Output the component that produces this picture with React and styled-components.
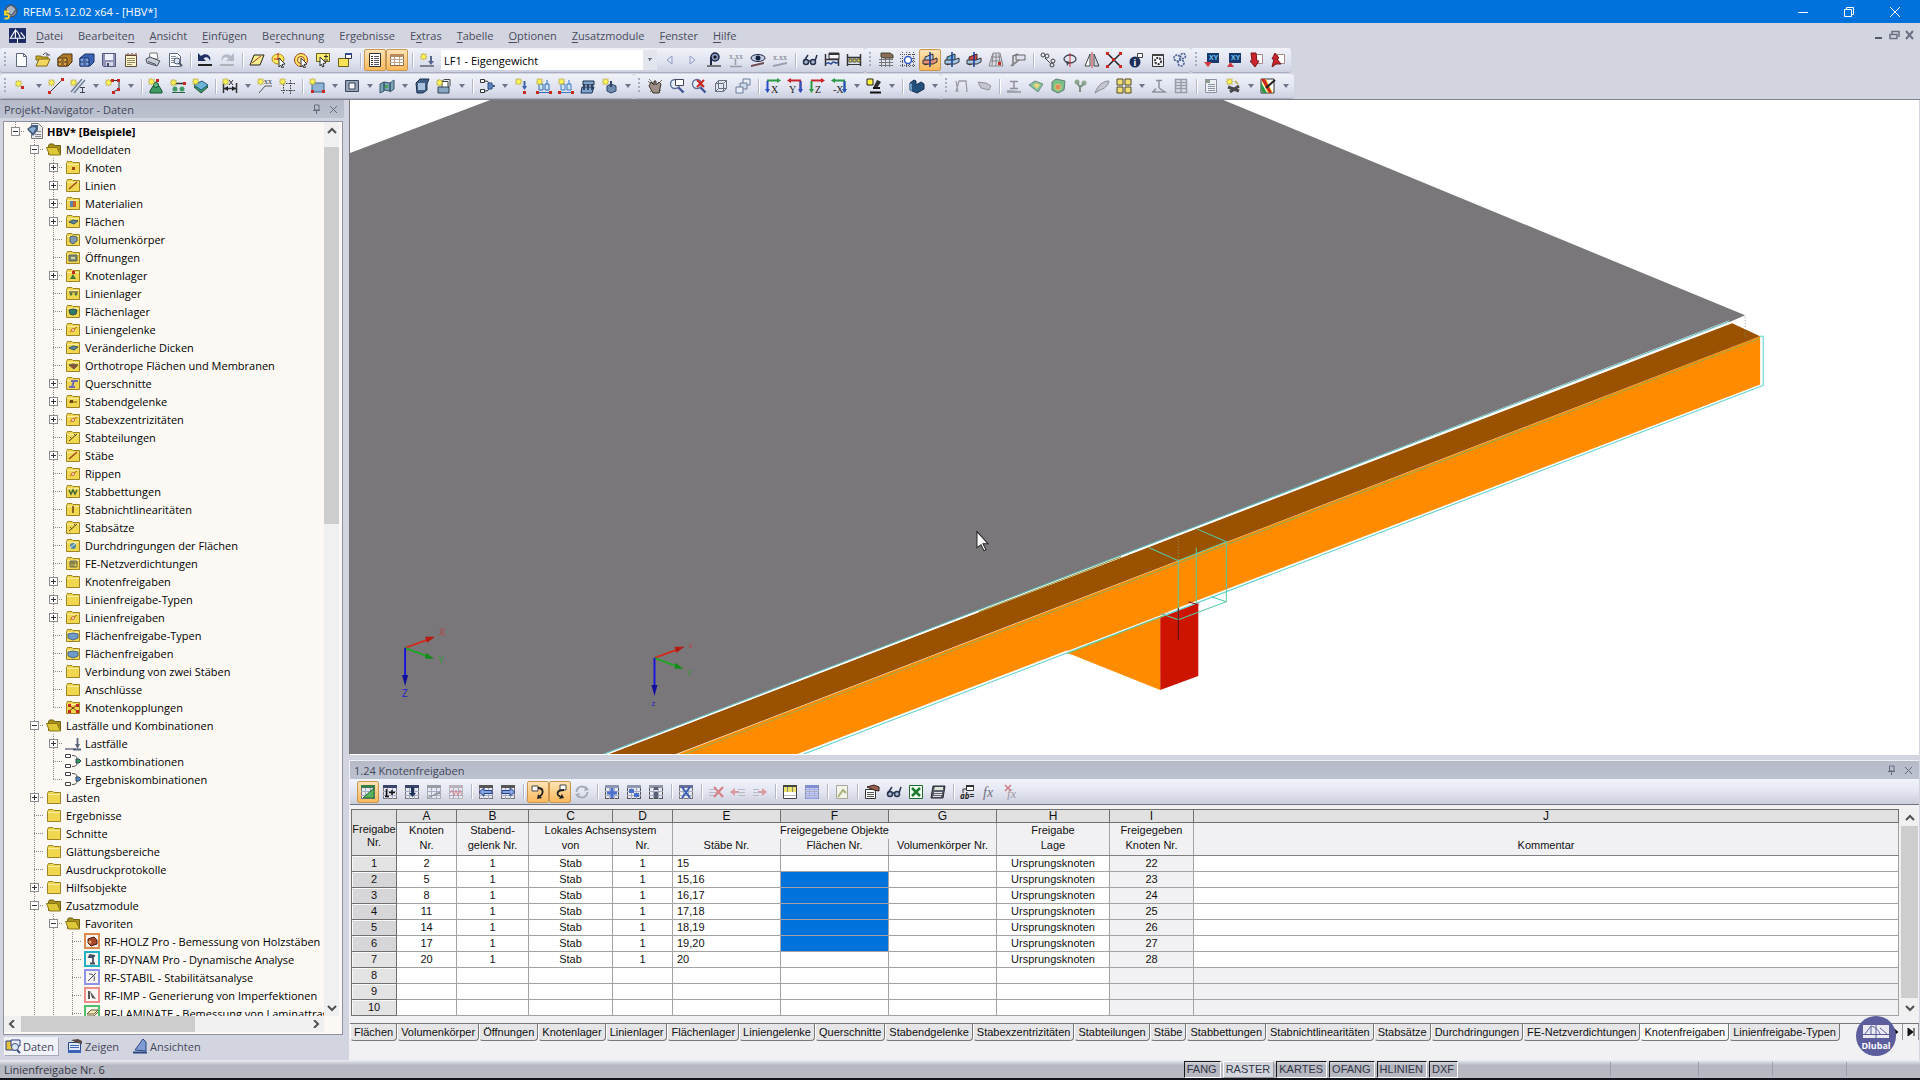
import React from 'react';
import styled, { createGlobalStyle, css } from 'styled-components';

const GlobalStyle = createGlobalStyle`
    * { box-sizing: border-box; }
    html, body { margin: 0; height: 100%; }
    body {
        font-family: "Open Sans", "Noto Sans", sans-serif;
        font-size: 11px;
        color: #111;
        background: #d2d4e0;
        overflow: hidden;
    }
    button, select { font: inherit; color: inherit; }
    button { border: 0; padding: 0; background: none; }
`;

const dots = 'repeating-linear-gradient(#8a8a8a 0 1px, transparent 1px 2px)';
const dotsX = 'repeating-linear-gradient(90deg, #8a8a8a 0 1px, transparent 1px 2px)';
const tableFont = '"Liberation Sans", Arial, sans-serif';

/* ---------- icon drawing helpers ---------- */

const Line = ({ d, c = '#333', w = 1 }) => <path d={d} fill="none" stroke={c} strokeWidth={w} />;
const Fill = ({ d, c, s = 'none' }) => <path d={d} fill={c} stroke={s} />;
const Star = ({ x = 0, y = 0 }) => (
    <path
        transform={`translate(${x} ${y})`}
        d="M3.5 0l.9 1.8L6.3.9l-.8 1.9L7.2 3.6l-1.8.8.8 1.9-1.9-.8-.8 1.7-.8-1.7-1.9.8.8-1.9L0 3.6l1.8-.8L.9.9l1.8.9z"
        fill="#fff35a" stroke="#a89b20" strokeWidth=".5"
    />
);
const Node = ({ x, y, c = '#c8281e' }) => <rect x={x} y={y} width="3" height="3" fill={c} />;
const Grid = ({ head = '#3a4468', c = '#777' }) => (
    <>
        <rect x="1.5" y="1.5" width="13" height="13" fill="#e6e9f2" stroke={c} />
        <rect x="1" y="1" width="14" height="3" fill={head} />
        <Line d="M1 7.5H15M1 11.5H15M5.5 4V15M10.5 4V15" c="#a5abc0" />
    </>
);
const Axis = ({ label, a, b, flip }) => (
    <>
        <Line d={flip ? 'M14 2.5H3M13.5 3V14' : 'M2 2.5H13'} c={a} w="2" />
        <Fill d={flip ? 'M4 0v5L0 2.5z' : 'M12 0v5l4-2.5z'} c={a} />
        <Line d={flip ? 'M13.5 3V12' : 'M2.5 3V12'} c={b} w="2" />
        <Fill d={flip ? 'M11 11h5l-2.5 4z' : 'M0 11h5l-2.5 4z'} c={b} />
        <text x={flip ? 2 : 6} y="15" fontSize="10" fontFamily="Liberation Serif, serif" fill="#222">{label}</text>
    </>
);
const Lens = ({ children }) => (
    <>
        <circle cx="6" cy="6" r="4.5" fill="#e6f0fb" stroke="#5a6f94" strokeWidth="1.4" />
        <Line d="M9.5 9.5L14.5 14.5" c="#40549a" w="2.4" />
        {children}
    </>
);
const Plane = ({ x, y }) => (
    <>
        <Fill d="M3 5l8-3v8l-8 3z" c={x} s="#333" />
        <Fill d="M1 8h9l5-2v4l-4 2H1z" c={y} s="#333" />
        <Line d="M8 0V15" c="#173a8c" w="1.5" />
    </>
);
const Support = ({ c = '#2f6fb0' }) => (
    <>
        <Fill d="M3 6h4v6H3zM9 6h4v6H9z" c="#cfe2f4" s={c} />
        <Line d="M2 14.5H14M5 2V6M11 2V6" c={c} />
        <Node x={0} y={13} /><Node x={13} y={13} />
    </>
);

const icons = {
    newDoc: <><Fill d="M3.5 1.5h7l3 3v10h-10z" c="#fff" s="#5b6880" /><Line d="M10.5 1.5v3h3" c="#5b6880" /></>,
    open: <><Fill d="M1 4h5l1 1h6v3H1z" c="#c9a92c" s="#80691a" /><Fill d="M1 14l3-7h11l-3 7z" c="#f2d860" s="#80691a" /><Line d="M8 3c2-3 5-2 5 0M11 3h4" c="#445" /></>,
    cabinet: <><Fill d="M1 6l5-4h9v8l-4 4H1z" c="#b07a28" s="#4d3510" /><Fill d="M1 6h9v8H1z" c="#d9a24a" s="#4d3510" /><Line d="M1 10H10M4 8H7M4 12H7" c="#4d3510" /></>,
    cabinetBlue: <><Fill d="M1 6l5-4h9v8l-4 4H1z" c="#3b63b4" s="#1b2e66" /><Fill d="M1 6h9v8H1z" c="#7fa4e4" s="#1b2e66" /><Line d="M1 10H10M4 8H7M4 12H7" c="#1b2e66" /></>,
    save: <><Fill d="M1.500 1.500h13v13h-12l-1-1z" c="#8f93b8" s="#55597c" /><Fill d="M4 2h8v6H4z" c="#eef0fa" /><Fill d="M5 10h7v4H5z" c="#d4d6e4" /><Fill d="M6 11h2v3H6z" c="#444a72" /></>,
    notes: <><Fill d="M2.500 3.500h11v11h-11z" c="#fbf4d0" s="#5c4a34" /><Line d="M3 2v2M5 1v3M7 2v2M9 1v3M11 2v2M13 1v3" c="#6a3f2a" /><Line d="M4 6.500H12M4 8.500H12M4 10.500H12M4 12.500H9" c="#9a8a60" /></>,
    print: <><Fill d="M5 1h7l1 6H4z" c="#fff" s="#777" /><Fill d="M1 7l4-2 10 4-3 5-10-3z" c="#c8ccd6" s="#4b4f5c" /><Line d="M3 9.500L11 12.500" c="#4b4f5c" /></>,
    preview: <><Fill d="M2.500 1.500h8l3 3v10h-11z" c="#fff" s="#5b6880" /><Line d="M4 4.500H9M4 6.500H8M4 8.500H7M4 10.500H7" c="#8890a0" /><circle cx="10" cy="9" r="3" fill="#d8e4f4" stroke="#4b5870" /><Line d="M12 11l3 3" c="#4b5870" w="2" /></>,
    undo: <><Fill d="M1 1v8h8L6.500 6.500C9 4 12 5 13 9 15 4 9 0 4 4z" c="#1e2f66" /><Fill d="M1 12h14v2H1z" c="#222" /></>,
    redo: <><Fill d="M15 1v8H7L9.500 6.500C7 4 4 5 3 9 1 4 7 0 12 4z" c="#b3b7c6" /><Fill d="M1 12h14v2H1z" c="#b0b2bc" /></>,
    plane: <><Fill d="M5 3h10l-4 10H1z" c="#f8ee8a" s="#222" /><Line d="M3 11L12 4" c="#a33" /></>,
    pick: <><ellipse cx="7" cy="7" rx="6" ry="5" fill="#ffe95c" stroke="#b08b1e" /><Line d="M7 1V8M3 7H10" c="#c23" /><Fill d="M8 6l6 6-3 .4 1.500 3-1.500.6-1.300-3L8 15z" c="#fff" s="#333" /></>,
    pickAll: <><circle cx="8" cy="8" r="6.500" fill="#ffe95c" stroke="#a3412a" /><circle cx="8" cy="8" r="3.500" fill="#fff3a0" stroke="#a3412a" /><Fill d="M8 6l6 6-3 .4 1.500 3-1.500.6-1.300-3L8 15z" c="#fff" s="#333" /></>,
    pickAdd: <><Fill d="M1.500 1.500h13v8h-13z" c="#f8ea70" s="#6a611c" /><Line d="M9 4.500h4M11 2.500v4M9 8h4" /><Fill d="M5 5l6 6-3 .4 1 3-1.500.6-1-3L5 14z" c="#fff" s="#333" /></>,
    pane: <><Fill d="M1.500 6.500h10v8h-10z" c="#f8e258" s="#6a611c" /><Fill d="M8.500 1.500h6v5h-6z" c="#fff" s="#334" /><Fill d="M8 1h7v2H8z" c="#334a8c" /></>,
    listView: <><Fill d="M2.500 1.500h11v13h-11z" c="#fff" s="#333" /><Line d="M4 4.500H6M4 6.500H6M4 8.500H6M4 10.500H6M4 12.500H6" /><Line d="M7 4.500H12M7 6.500H12M7 8.500H12M7 10.500H12M7 12.500H12" c="#556" /></>,
    tableView: <><Fill d="M1.500 2.500h13v11h-13z" c="#fff" s="#8a6440" /><Fill d="M1 2h14v3H1z" c="#b88a60" /><Line d="M1 7.500H15M1 10.500H15M5.500 5V13M10.500 5V13" c="#bba58c" /></>,
    loadNew: <><Star x={1} y={1} /><Fill d="M1 13h14v2H1z" c="#7c8290" /><Fill d="M11 4h2v5h2l-3 4-3-4h2z" c="#55658c" /></>,
    prev: <Fill d="M10 4L5 8l5 4z" c="#e3e6f3" s="#8f9bc8" />,
    next: <Fill d="M6 4l5 4-5 4z" c="#e3e6f3" s="#8f9bc8" />,
    loadShow: <><circle cx="9" cy="5" r="4" fill="#8797bb" stroke="#1c2746" strokeWidth="1.500" /><circle cx="9" cy="5" r="1.500" fill="#111" /><Line d="M5 5V13" c="#1c2746" w="2" /><Fill d="M1 13h14v2H1z" c="#777" /></>,
    valGray: <><text x="1" y="7" fontSize="8" fontFamily="Liberation Serif, serif" fill="#777a86">x.xx</text><Line d="M7.500 7V13M2 14.500H14" c="#9a9da8" w="1.500" /></>,
    resShow: <><ellipse cx="8" cy="6" rx="7" ry="3.500" fill="#c3cbe0" stroke="#1c2746" /><circle cx="8" cy="6" r="2.500" fill="#15203c" /><Fill d="M1 15V13l13-3v2z" c="#704a50" /></>,
    valLine: <><text x="1" y="8" fontSize="8" fontFamily="Liberation Serif, serif" fill="#6d707c">x.xx</text><Fill d="M1 15v-2l14-3v2z" c="#9b9eaa" /></>,
    glasses: <><circle cx="4" cy="10" r="2.500" fill="#aebbd6" stroke="#28324e" strokeWidth="1.500" /><circle cx="11" cy="10" r="2.500" fill="#aebbd6" stroke="#28324e" strokeWidth="1.500" /><Line d="M7 9L9 9M2 9L6 3M13 9L15 3" c="#28324e" w="1.500" /></>,
    frame: <><Fill d="M5 1h10v6H5z" c="#f3f4f9" s="#333" /><Fill d="M5 1h10v2H5z" c="#333" /><Line d="M1.500 2V14M1 7.500H15M14.500 7V14" w="1.500" /><Line d="M2 12c3-4 4 2 6-1s4 2 6-1" c="#2e4a9a" w="1.500" /></>,
    frame2: <><Line d="M1.500 2V14M1 5.500H15M14.500 2V14" w="1.500" /><Fill d="M3 7h3v3H3zM7 7h3v3H7zM11 7h3v3h-3z" c="#e7d757" s="#554" /><Line d="M1 12.500H15" /></>,
    handGrid: <><Line d="M1 7.500H15M1 10.500H15M1 13.500H15M3.500 6V15M7.500 6V15M11.500 6V15" c="#777" /><Fill d="M3 1h9l3 2v3H6L3 5z" c="#8a6a58" s="#443" /></>,
    snapGrid: <><path d="M2.500 0V16M6.500 0V16M9.500 0V16M13.500 0V16M0 2.500H16M0 6.500H16M0 9.500H16M0 13.500H16" stroke="#555" strokeDasharray="1 1" fill="none" /><circle cx="8" cy="8" r="3.500" fill="#fff" stroke="#3059c4" strokeWidth="1.500" /></>,
    planeXY: <Plane x="#b9c8de" y="#e58f77" />,
    planeYZ: <Plane x="#6fb2e4" y="#a3c6ea" />,
    planeXZ: <Plane x="#e0463c" y="#a9c5e2" />,
    gridDots: <><Fill d="M5 1h7l3 13H1z" c="#d9dde8" s="#888" /><Line d="M3 5H13M3 9H14M8 1V14M5 2L4 14M11 2L12 14" c="#888" /><Node x={10} y={10} /></>,
    pin: <><Line d="M3 14V4L8 2" c="#777" w="1.500" /><Fill d="M6 3h9v5H6z" c="#dfe2ec" s="#666" /><Line d="M1 14L9 8" c="#888" w="2" /></>,
    moveCopy: <><circle cx="3" cy="3" r="2" fill="none" stroke="#444" /><circle cx="7" cy="4" r="2" fill="none" stroke="#444" /><Line d="M5 6L11 12" c="#444" /><circle cx="12" cy="13" r="2" fill="none" stroke="#444" /><circle cx="13" cy="9" r="2" fill="none" stroke="#444" /></>,
    rotate: <><ellipse cx="8" cy="7" rx="6" ry="4" fill="none" stroke="#445" strokeWidth="1.300" /><Line d="M8 1V15" c="#c33" /><Fill d="M4 9l4 1-3 4z" c="#445" /></>,
    mirror: <><Fill d="M6 2v12H1z" c="#fff" s="#444" /><Fill d="M10 2v12h5z" c="#cfd3de" s="#444" /><Line d="M8 0V16" c="#c33" /></>,
    connect: <><Line d="M2 2L14 14M14 2L2 14" c="#222" w="1.500" /><Node x={0} y={0} /><Node x={13} y={0} /><Node x={0} y={13} /><Node x={13} y={13} /><Node x={6} y={6} /></>,
    info: <><circle cx="7" cy="10" r="5.500" fill="#1f2f58" /><Fill d="M9.500 1.500h5v4h-5z" c="#fff" s="#444" /><text x="5.500" y="13.500" fontSize="9" fontWeight="700" fill="#fff">i</text></>,
    settings: <><Fill d="M2.500 3.500h11v11h-11z" c="#eef0f5" s="#333" /><Fill d="M2 2h12v2H2z" c="#444" /><circle cx="8" cy="9" r="3" fill="#fff" stroke="#333" strokeWidth="2" strokeDasharray="2 1" /></>,
    gears: <><circle cx="5" cy="6" r="3" fill="#dfe5f2" stroke="#43588c" strokeWidth="1.500" strokeDasharray="2 1" /><circle cx="11" cy="4" r="2.500" fill="#dfe5f2" stroke="#43588c" strokeWidth="1.500" strokeDasharray="2 1" /><circle cx="9" cy="11" r="3" fill="#dfe5f2" stroke="#43588c" strokeWidth="1.500" strokeDasharray="2 1" /></>,
    xyDown: <><Fill d="M3 1h12v10H3z" c="#17396e" /><text x="5" y="8" fontSize="7" fontWeight="700" fill="#6fc0ee">XY</text><Fill d="M0 10h8l-4 5z" c="#d03a3e" /></>,
    xyUp: <><Fill d="M3 1h12v10H3z" c="#17396e" /><text x="5" y="8" fontSize="7" fontWeight="700" fill="#6fc0ee">XY</text><Fill d="M1 15h7l-3.500-5z" c="#d03a3e" /></>,
    pdfDown: <><Fill d="M7.500 2.500h7v9h-7z" c="#fff" s="#a88" /><Fill d="M3 1l5 0 1 8h2l-4 6-5-6h2z" c="#c8262c" s="#7d1418" /></>,
    pdfUp: <><Fill d="M7.500 2.500h7v9h-7z" c="#fff" s="#a88" /><Fill d="M5 1l4 5-2 1 4 5H6L2 15 4 7H2z" c="#c8262c" s="#7d1418" /></>,

    nodeNew: <><Star x={2} y={2} /><Node x={8} y={8} /></>,
    lineNew: <><Line d="M2 14L14 2" /><Star x={0} y={1} /><Node x={0} y={13} /><Node x={13} y={0} /></>,
    memberNew: <><Line d="M1 14L12 1M4 15L15 2" c="#6e7f9c" w="1.500" /><Star x={0} y={1} /><Line d="M10 9.500h5M10 14.500h5M12.500 10V14" c="#445" /></>,
    polyNew: <><Line d="M5 2.500H14V11L8 14" c="#333" /><Star x={0} y={1} /><Node x={6} y={1} /><Node x={12} y={1} /><Node x={12} y={10} /><Node x={7} y={13} /></>,
    nodeSupport: <><Fill d="M5 8h6l3 5v2H2v-2z" c="#3e9a63" s="#1e5335" /><circle cx="8" cy="7" r="2.500" fill="#5dbb80" stroke="#1e5335" /><Node x={8} y={1} /><Star x={0} y={0} /></>,
    lineSupport: <><Line d="M2 5.500H14" c="#333" w="1.500" /><Node x={13} y={4} /><circle cx="5" cy="11" r="2.500" fill="#3e9a63" /><circle cx="12" cy="11" r="2.500" fill="#3e9a63" /><Line d="M2 14.500H15" c="#2e5f44" /><Star x={0} y={1} /></>,
    surfSupport: <><Fill d="M2 9l8-4 6 4-7 6z" c="#3b9a6a" s="#1e5335" /><Fill d="M2 7l8-4 6 4-7 5z" c="#6fb5d8" s="#24587c" /><Star x={0} y={0} /></>,
    dimension: <><Line d="M1.500 5V15M14.500 5V15M2 10.500H14" w="1.500" /><Fill d="M2 10.500l4-2.500v5zM14 10.500l-4-2.500v5z" c="#222" /><Line d="M7 2l4 5M11 2L7 7" /><Star x={0} y={0} /></>,
    label: <><Line d="M2 15L8 8H15" c="#555" /><text x="7" y="6" fontSize="8" fontFamily="Liberation Serif, serif" fill="#333">xx</text><Star x={0} y={0} /></>,
    guide: <><path d="M4.500 4V16M11.500 2V16M2 5.500H16M2 12.500H16" stroke="#444" strokeDasharray="1.500 1" fill="none" /><Star x={0} y={0} /></>,
    surfNew: <><Fill d="M3 5h12v9H3z" c="#8fb4d6" s="#3c6288" /><Star x={0} y={0} /><Node x={2} y={12} /><Node x={13} y={12} /></>,
    openingNew: <><Fill d="M1.500 2.500h13v11h-13z" c="#95a3b8" s="#3b4658" /><Fill d="M5 5h6v6H5z" c="#f2f4f8" s="#3b4658" /></>,
    solidPlane: <><Fill d="M1 6l4-2v9l-4 2zM5 4l6 1v8l-6-1zM11 5l4-3v9l-4 3z" c="#7fa3b8" s="#35566a" /><Node x={6} y={7} c="#49a55c" /></>,
    solid: <><Fill d="M2 5l4-4h9l-2 5v6l-4 3H3z" c="#3f5f84" s="#1d3048" /><Fill d="M4 5h7v7H4z" c="#a9c3de" /></>,
    solidNew: <><Fill d="M6 3.500h6v6H6z" c="#fff" s="#444" /><Line d="M6 3.500l2-2h6v6l-2 2" c="#444" /><Fill d="M2 9h11v6H2z" c="#86a6c4" s="#345" /><Star x={0} y={1} /></>,
    combo: <><Fill d="M1.500 1.500h4v3h-4zM1.500 11.500h4v3h-4z" c="#fff" s="#333" /><Line d="M6 3C9 3 10 4 10 6M6 13C9 13 10 12 10 10" c="#333" /><Fill d="M9 5h4v2l3 1-3 1v2H9z" c="#5a83bd" s="#2f4f80" /></>,
    loadNode: <><Star x={1} y={0} /><Line d="M10.500 3V10" c="#3f63a8" w="2" /><Fill d="M8 8h5l-2.500 4z" c="#3f63a8" /><Node x={9} y={13} /></>,
    loadLine: <><Support /><Star x={0} y={0} /></>,
    loadMember: <><Support c="#3c7cc0" /><Star x={0} y={0} /></>,
    loadSurf: <><Fill d="M3 3h11v4H3zM2 9h12l-2 6H1z" c="#7ea4cc" s="#1c2f50" /><Line d="M4 6V12M8 6V12M12 6V12" c="#1c2f50" w="1.500" /></>,
    loadSolid: <><Fill d="M5 8l4-2 5 2v5l-5 2-4-2z" c="#6f8bb0" s="#2e4468" /><Line d="M9 3V9" c="#2e4468" w="2" /><Star x={0} y={0} /></>,
    pan: <><Line d="M1 3L13 15M2 1L14 13M15 2L3 14" c="#776" /><Fill d="M4 4l3 3V3h2v4l3-3 2 2-2 9H6L2 8z" c="#9d8f85" s="#3c352f" /></>,
    zoomWin: <Lens><Fill d="M6.500 1.500h8v6h-8z" c="#fff" s="#445" /></Lens>,
    zoomOff: <Lens><Line d="M6 2l7 7M13 2L6 9" c="#d02020" w="2" /></Lens>,
    wire: <Line d="M2.500 5.500h8v8h-8zM5.500 2.500h8v8M2.500 5.500l3-3M10.500 5.500l3-3M10.500 13.500l3-3M5.500 2.500v8h8M2.500 13.500l3-3" c="#68727f" />,
    boxes: <><Fill d="M8 1h7v6H8z" c="#e6ebf4" s="#6a7c9a" /><Fill d="M5 5h7v6H5z" c="#d0d9e8" s="#6a7c9a" /><Fill d="M1 9h7v6H1z" c="#e6ebf4" s="#6a7c9a" /></>,
    axX: <Axis label="X" a="#2c9a45" b="#2b50c0" />,
    axY: <Axis label="Y" a="#c9232b" b="#2b50c0" flip />,
    axZ: <Axis label="Z" a="#c9232b" b="#2c9a45" />,
    axNX: <Axis label="-X" a="#2c9a45" b="#2b50c0" flip />,
    display: <><Fill d="M1 1h6v6H1z" c="#fff23a" s="#222" /><Line d="M13 3L8 10M7 10h7M4 14.500H15" c="#111" w="2" /><Fill d="M11 2l4 2-4 6-3-2z" c="#333" /></>,
    solidDark: <><Fill d="M1 5l4-3 2 1v4l5-3 3 2v5l-7 4-7-3z" c="#24507e" s="#122c4a" /><Fill d="M1 5l2 1v7l-2-1z" c="#6f9ac2" /></>,
    deform: <Line d="M2 14L5 3H12L13 14M4 14L2 3" c="#9a9ca5" w="1.300" />,
    deform2: <Fill d="M2 4l8 1 5 3-2 4-8-2z" c="#c3c5cd" s="#92949e" />,
    section: <><Line d="M4 3.500H12M8 3V10M4 10.500H12" c="#8e919c" w="1.500" /><Fill d="M1 15v-3l14 1v2z" c="#a2a5b0" /></>,
    colorSurf: <><Fill d="M1 7l6-4 8 3-5 8z" c="#7cc49a" s="#7a8a88" /><Fill d="M5 7l4-2 3 2-3 4z" c="#ecd57b" /></>,
    colorSolid: <><Fill d="M2 4l4-3 9 2-1 9-6 3-6-3z" c="#7bc08a" s="#5f7f70" /><circle cx="8" cy="9" r="3" fill="#e08a62" stroke="#d8c768" /></>,
    forces: <><circle cx="5" cy="4" r="2.500" fill="#8ea894" /><circle cx="12" cy="5" r="2.500" fill="#8ea894" /><Line d="M8 7V14M5 5L8 9 12 6" c="#7e9186" w="2" /></>,
    smooth: <Fill d="M1 15c3-8 8-12 14-12-1 5-5 8-9 9z" c="#c4c6cf" s="#8a8d99" />,
    panels: <Fill d="M1 1h6v6H1zM9 1h6v6H9zM1 9h6v6H1zM9 9h6v6H9z" c="#f0dc74" s="#4f4a2a" />,
    anim: <Line d="M5 2.500H11M8 3V10M5 10.500L2 14M8 10L14 14H1" c="#8e919c" w="1.500" />,
    tableGray: <Line d="M2.500 1.500h11v13h-11zM2 4.500H14M2 7.500H14M2 10.500H14M8 2V14" c="#9a9da8" w="1.500" />,
    report: <><Fill d="M2.500 1.500h11v13h-11z" c="#eceef4" s="#8e93a2" /><Fill d="M2 1h5v4H2z" c="#8c9c90" /><Line d="M5 6.500H12M5 8.500H12M5 10.500H12M5 12.500H12" c="#8e93a2" /></>,
    wizard: <><Star x={1} y={0} /><Line d="M5 14L14 8M3 9L14 13" c="#4a4a4e" w="3" /><Line d="M10 3L13 6" c="#b8a63a" w="1.500" /></>,
    colors: <><Fill d="M1 1h13v14H1z" c="#fff" s="#333" /><Fill d="M1 1l5 0 7 14H8z" c="#e8c722" /><Fill d="M1 4l6 11H3L1 12z" c="#2c9a45" /><Fill d="M1 1l4 0 7 14H9z" c="#d0261f" /><Line d="M6 10L15 2" c="#222" w="2" /></>,

    tblEdit: <><Grid head="#3b7a4a" /><Fill d="M3 14L14 4v10z" c="#58b45c" s="#2a6a34" /></>,
    tblRowIns: <><Grid /><Line d="M4.500 5V13M3 12.500H7M7 8.500H13M10 6V11" c="#111" w="1.500" /></>,
    tblColIns: <><Grid /><Fill d="M7 3h3v6h2l-3.500 4L5 9h2z" c="#22305c" /></>,
    tblLine: <><Grid head="#9a9ca6" c="#aaa" /><Fill d="M2 13c5-1 7-5 12-5v2c-5 0-7 3-12 4z" c="#8d9098" /></>,
    tblWave: <><Grid head="#b9b0b8" c="#bbb" /><Line d="M2 9L4 6l2 6 2-6 2 6 2-6 2 5" c="#d78a92" /></>,
    tblPrev: <><Grid head="#555" /><Fill d="M1 8l5-4v2.500h8v3H6V12z" c="#86a5e0" s="#27458c" /></>,
    tblNext: <><Grid head="#555" /><Fill d="M15 8l-5-4v2.500H2v3h8V12z" c="#86a5e0" s="#27458c" /></>,
    hookDown: <><Fill d="M2 2h6v5H2z" c="#fff" s="#444" /><Line d="M8 4c6 0 6 6 1 9" c="#222" w="1.800" /><Fill d="M7 15l1-5 4 4z" c="#222" /></>,
    hookUp: <><Fill d="M8 1h6v5H8z" c="#fff" s="#444" /><Line d="M12 6c-8 0-8 5-3 7" c="#222" w="1.800" /><Fill d="M12 14l-5 1 3-5z" c="#222" /></>,
    sync: <><circle cx="8" cy="8" r="5.500" fill="none" stroke="#a7abb5" strokeWidth="2" strokeDasharray="13 4" /><Fill d="M12 2l3 4-5 1zM4 14l-3-4 5-1z" c="#a7abb5" /></>,
    tblPlus: <><Grid head="#8f96b0" c="#555" /><Line d="M8 4V14M3 9H13" c="#4a70cc" w="3" /></>,
    tblSwap: <><Grid head="#8f96b0" c="#555" /><Fill d="M3 5h5v4H3zM8 9h5v4H8z" c="#4a70cc" /></>,
    tblInfo: <><Grid head="#8f93a4" c="#555" /><Fill d="M6 3h4v3H6zM6 8h4v6H6z" c="#5b6072" /></>,
    tblX: <><Grid head="#666f96" /><Line d="M4 3L12 14M12 3L4 14" c="#3b5fb4" w="2" /></>,
    rowDel: <><Line d="M1 5.500H9M1 8.500H9M1 11.500H9" c="#b8bac6" /><Line d="M6 3L15 13M15 3L6 13" c="#d77f86" w="2" /></>,
    rowLeft: <><Fill d="M0 8l5-4v3h4v2H5v3z" c="#d99aa0" /><Line d="M8 5.500H15M8 8.500H15M8 11.500H15" c="#b8bac6" /></>,
    rowRight: <><Fill d="M15 8l-5-4v3H6v2h4v3z" c="#d99aa0" /><Line d="M1 5.500H7M1 8.500H7M1 11.500H7" c="#b8bac6" /></>,
    tblYellow: <><Fill d="M1.500 2.500h13v12h-13z" c="#fff" s="#444" /><Fill d="M2 3h12v5H2z" c="#ece36a" /><Fill d="M1 1h14v2H1z" c="#444" /><Line d="M5.500 3V8M10.500 3V8" c="#887" /><Line d="M2 11.500H14" c="#bbb" /></>,
    tblBlue: <><Grid head="#7f8ed2" c="#888fc2" /><Line d="M2 5.500H14M2 9.500H14M2 13.500H14" c="#a5b1ee" w="2" /></>,
    tblNote: <><Fill d="M2.500 1.500h11v13h-11z" c="#f3f3ea" s="#a5a89a" /><Line d="M4 13L9 6l3 3" c="#aab07a" w="2" /></>,
    propHand: <><Fill d="M1.500 5.500h10v9h-10z" c="#fff" s="#333" /><Line d="M3 8.500H10M3 10.500H10M3 12.500H10" c="#555" /><Fill d="M3 3l7-2 5 2v4l-5-1z" c="#97614a" s="#322" /></>,
    excel: <><Fill d="M1.500 1.500h13v13h-13z" c="#f2fff2" s="#1f6a2c" /><Line d="M4 4L12 12M12 4L4 12" c="#1f7a30" w="2.500" /></>,
    calc: <><Fill d="M3 2h12l-2 12H1z" c="#5b5f6c" s="#23252e" /><Fill d="M5 3h8v3H4z" c="#dfe6d8" /><Line d="M4 8.500H12M4 10.500H12M3 12.500H11" c="#e6e6ea" /></>,
    abc: <><Fill d="M6.500 1.500h7v5h-7z" c="#fff" s="#333" /><Fill d="M6 1h8v2H6z" c="#333" /><Line d="M3 9V5H6" /><text x="0" y="15" fontSize="8" fontStyle="italic" fontWeight="700" fill="#222">ab=</text></>,
    fx: <text x="1" y="13" fontSize="14" fontStyle="italic" fontFamily="Liberation Serif, serif" fill="#6d707c">fx</text>,
    fxDel: <><text x="3" y="14" fontSize="13" fontStyle="italic" fontFamily="Liberation Serif, serif" fill="#a09aa6">fx</text><Line d="M1 1L7 7M7 1L1 7" c="#d07a88" w="1.500" /></>,
};

const Svg = ({ size = 16, children }) => (
    <svg width={size} height={size} viewBox="0 0 16 16" aria-hidden="true">{children}</svg>
);

/* small emblem on a folder, by kind */
const emblems = {
    knoten: <Node x={7} y={8} c="#a4421c" />,
    linie: <Line d="M4 12L12 5" c="#a04a18" w="1.500" />,
    material: <><Fill d="M5 6h3v6H5z" c="#5f83a8" /><Fill d="M8 6h3v6H8z" c="#d0622c" /></>,
    flaeche: <Fill d="M4 9l4-2 5 1-4 3z" c="#5d88a0" s="#3b5666" />,
    volumen: <Fill d="M5 6l3-1 4 1v4l-4 3-3-2z" c="#7f98ad" s="#4a606f" />,
    oeffnung: <><Fill d="M4 6h8v6H4z" c="#7c8b78" s="#59644a" /><Fill d="M6 8h4v2H6z" c="#d9d3a0" /></>,
    lager: <><Fill d="M8 7l3 5H5z" c="#3f7b3c" /><Node x={7} y={4} /></>,
    linienlager: <><circle cx="6" cy="9" r="1.500" fill="#4a7a3b" /><circle cx="11" cy="9" r="1.500" fill="#4a7a3b" /><Line d="M4 7H13" c="#445" /></>,
    flaechenlager: <Fill d="M4 7l4-1 4 1-1 4-3 1-3-1z" c="#2f7a68" s="#2a4d4a" />,
    gelenk: <><Line d="M5 11L12 6" c="#d0832c" w="1.300" /><circle cx="8" cy="9" r="1.500" fill="#fff" stroke="#c76a30" /></>,
    ortho: <Fill d="M4 8l4-1 5 1-4 4z" c="#984f3a" s="#5b5c48" />,
    quer: <Line d="M6 6H13M4 12H10M9 6L7 12" c="#6f6ab8" w="2" />,
    stabend: <><Line d="M4 9H12" c="#7d5a1c" /><Node x={5} y={7} c="#6b4a16" /></>,
    teilung: <Line d="M4 12L12 5M5 8L7 10M9 5L11 7" c="#5c4716" />,
    bettung: <Line d="M4 7L6 11L8 7L10 11L12 7" c="#3d6a31" w="1.500" />,
    nichtlin: <Line d="M8 5V12" c="#6b4212" w="1.500" />,
    durch: <><circle cx="8" cy="9" r="3" fill="#4b8aa3" /><Line d="M5 11L11 6" c="#e7ecef" /></>,
    netz: <Line d="M5 6h7v6H5zM5 8H12M7 6V12M9 6V12" c="#63634f" />,
    freiflaeche: <Fill d="M3 7l5-1 5 1v4l-5 2-5-2z" c="#6f9cc9" s="#47678a" />,
    koppel: <><Line d="M4 6L12 12M12 6L4 12" c="#7a3410" /><Node x={3} y={5} /><Node x={11} y={5} /><Node x={3} y={11} /><Node x={11} y={11} /></>,
};

const Folder = ({ kind }) => (
    <Svg>
        <Fill d="M1.500 4.500V14.500H14.500V3.500H8L7 2.500H2.500z" c="#f1d650" s="#9d8526" />
        <Fill d="M2 5h12v1H2z" c="#fbeea0" />
        {emblems[kind]}
    </Svg>
);
const OpenFolder = () => (
    <Svg>
        <Fill d="M2.500 4.500V13.500H14.500V4.500H8.500L7.500 3H3.500z" c="#a8911d" s="#71610f" />
        <Fill d="M0.500 6.500H11L14.500 14H3.500z" c="#dfc838" s="#8a7617" />
    </Svg>
);
const moduleColors = { holz: '#d98a4c', dynam: '#21b3c4', stabil: '#8f93e6', imp: '#ee8f8c', laminate: '#4fbf6c' };
const moduleMarks = {
    holz: <><Fill d="M4 6l6-2 3 3v4l-6 2-3-3z" c="#a8442a" s="#4e1d12" /><circle cx="6" cy="9" r="1.500" fill="#e9b07a" /></>,
    dynam: <Line d="M11 5L6 4L5 6L9 6V12M6 12.500H11" c="#444f66" w="1.800" />,
    stabil: <Line d="M4 12L12 4M5 5c5 0 6 2 5 7" c="#444b60" />,
    imp: <><Line d="M5 4V12" c="#222" w="1.500" /><Fill d="M6 4l6 8-4-1z" c="#555" /></>,
    laminate: <><Fill d="M3 9l4-4h7l-4 4z" c="#f6e9c2" s="#6b5a2a" /><Line d="M3 11H10L14 7" c="#6b5a2a" /></>,
};
const ModuleIcon = ({ kind }) => (
    <Svg>
        <rect x="1" y="1" width="14" height="14" fill="#f8f4f0" stroke={moduleColors[kind]} strokeWidth="2" />
        {moduleMarks[kind]}
    </Svg>
);

const TreeIcon = ({ kind }) => {
    if (kind === 'open') return <OpenFolder />;
    if (moduleColors[kind]) return <ModuleIcon kind={kind} />;
    if (kind === 'root') return <Svg><Fill d="M4.500 0.500h7l4 4v11h-11z" c="#e7e9ee" s="#777" /><Line d="M10 8.500H14M8 11.500H14M8 13.500H14" c="#888" /><Fill d="M0 6l5-4 6 0v5l-5 6z" c="#48607f" /><Fill d="M2 6l4-2 3 1-3 5z" c="#8fb0d4" /></Svg>;
    if (kind === 'lf') return <Svg><Fill d="M0 13h11v2H0z" c="#9096a4" /><Line d="M12.500 3V10M8 14.500H16" c="#5b657a" w="1.800" /><Fill d="M10 9h5l-2.500 5z" c="#5b657a" /></Svg>;
    if (kind === 'lk' || kind === 'ek') {
        const c = kind === 'lk' ? '#2f9a5a' : '#5a8ac8';
        return <Svg><Fill d="M.5 1.500h5v3h-5zM.5 11.500h5v3h-5z" c="#fff" s="#444" /><Line d="M7 2.500C10 2.500 12 3 12 6M7 13.500C10 13.500 12 13 12 10" c="#555" /><Fill d="M11 6h3l2 2-2 2h-3z" c={c} s="#345" /></Svg>;
    }
    return <Folder kind={kind} />;
};

/* ---------- shell ---------- */

const Shell = styled.div`
    display: flex;
    flex-direction: column;
    height: 100vh;
    border-bottom: 2px solid #12141c;
    background: #d2d4e0;
`;

const TitleBar = styled.header`
    display: flex;
    align-items: center;
    height: 23px;
    padding: 0 2px;
    background: #0072dc;
    color: #fff;
    line-height: 22px;

    h1 {
        flex: 1;
        margin: 0 0 0 5px;
        font-size: 11px;
        font-weight: 400;
    }
`;

const WindowButton = styled.button`
    display: flex;
    align-items: center;
    justify-content: center;
    width: 46px;
    height: 22px;
`;

const MenuBar = styled.nav`
    display: flex;
    align-items: center;
    height: 24px;
    padding: 0 5px 0 4px;
    color: #4a4c5c;

    a {
        margin-right: 15px;
        color: inherit;
        text-decoration: none;
    }
    u { text-underline-offset: 2px; }
`;

const AppMark = styled.span`
    display: flex;
    margin: 0 10px 0 5px;
`;

const MdiButtons = styled.div`
    display: flex;
    gap: 4px;
    margin-left: auto;
`;

const ToolRow = styled.div`
    display: flex;
    height: 26px;
    padding-top: 1px;
`;

const Toolbar = styled.div`
    display: flex;
    align-items: center;
    height: 25px;
    padding: 0 0 0 10px;
    border-radius: 3px;
    border-bottom: 1px solid #a9adbd;
    background: linear-gradient(#f0f2f9, #dfe2ef 60%, #ccd0e0);

    &::before {
        content: "";
        width: 2px;
        height: 16px;
        margin: 0 4px 0 -6px;
        background: repeating-linear-gradient(#a9adc0 0 2px, transparent 2px 4px);
    }
    &:last-child { padding-right: 2px; }
`;

const IconButton = styled.button`
    display: flex;
    align-items: center;
    justify-content: center;
    width: 22px;
    height: 22px;
    flex: none;
    border-radius: 2px;
    ${p => p.$on && css`
        border: 1px solid #c9974f;
        background: linear-gradient(#fde3b4, #fbb95c);
    `}
`;

const DropButton = styled.button`
    display: flex;
    align-items: center;
    justify-content: center;
    width: 13px;
    height: 22px;
    flex: none;

    &::after {
        content: "";
        border: 3px solid transparent;
        border-top: 4px solid #70748a;
        border-bottom: 0;
    }
`;

const Separator = styled.span`
    width: 1px;
    height: 15px;
    margin: 0 3px 0 4px;
    flex: none;
    background: #b3b7c7;
    box-shadow: 1px 0 #fff;
`;

const ComboBox = styled.label`
    display: flex;
    width: 216px;
    height: 20px;
    margin: 0 2px 0 3px;
    background: #fff;

    select {
        flex: 1;
        appearance: none;
        border: 0;
        padding: 0 3px;
        background: none;
        color: #000;
    }
    &::after {
        content: "";
        width: 14px;
        background:
            linear-gradient(-135deg, #70748a 50%, transparent 50%) 4px 8px / 3px 3px no-repeat,
            linear-gradient(135deg, #70748a 50%, transparent 50%) 7px 8px / 3px 3px no-repeat,
            #e3e5ee;
    }
`;

/* names are space separated: "|" is a rule, "!" marks a pressed button, ">" adds a drop-down */
const Tools = ({ items }) => items.split(' ').map((item, i) => {
    if (item === '|') return <Separator key={i} />;
    const name = item.replace(/[!>]/, '');
    return (
        <React.Fragment key={i}>
            <IconButton type="button" aria-label={name} $on={item.endsWith('!')}>
                <Svg>{icons[name]}</Svg>
            </IconButton>
            {item.endsWith('>') && <DropButton type="button" aria-label={`${name} Auswahl`} />}
        </React.Fragment>
    );
});

const Workspace = styled.div`
    display: grid;
    grid-template-columns: 344px minmax(0, 1fr);
    column-gap: 5px;
    flex: 1;
    min-height: 0;
    padding-right: 1px;
    border-top: 1px solid #80838f;
`;

const PaneTitle = styled.h2`
    display: flex;
    align-items: center;
    height: 18px;
    margin: 0;
    padding: 0 6px 0 4px;
    background: linear-gradient(#b6bac8, #bcc2d0);
    color: #44475a;
    font-size: 11px;
    font-weight: 400;

    span { flex: 1; }
    svg { margin-left: 8px; }
`;

const PinClose = () => (
    <>
        <svg width="9" height="10" viewBox="0 0 9 10"><path d="M2.500 1V6H7V1H2.500M1 6.500H8M4.500 7V10" fill="none" stroke="#666a7c" /></svg>
        <svg width="9" height="9" viewBox="0 0 9 9"><path d="M1 1L8 8M8 1L1 8" stroke="#666a7c" /></svg>
    </>
);

/* ---------- navigator ---------- */

const Navigator = styled.aside`
    display: flex;
    flex-direction: column;
    min-height: 0;
`;

const TreeBox = styled.div`
    display: grid;
    grid-template: minmax(0, 1fr) 16px / minmax(0, 1fr) 15px;
    flex: 1;
    min-height: 0;
    margin: 3px 1px 0 3px;
    padding: 0 3px 2px 0;
    border: 1px solid #8f93a4;
    background: #fcf9f5;
`;

const TreeList = styled.ul`
    margin: 0;
    padding: 0 0 0 2px;
    overflow: hidden;
    list-style: none;
`;

const TreeRow = styled.li`
    display: flex;
    align-items: center;
    height: 18px;
    white-space: nowrap;
    font-weight: ${p => (p.$root ? 700 : 400)};
    color: #000;

    > svg {
        flex: none;
        margin: 0 4px 0 2px;
    }
`;

const guideBackgrounds = {
    '|': `${dots} 9px 0 / 1px 100% no-repeat`,
    t: `${dots} 9px 0 / 1px 100% no-repeat, ${dotsX} 9px 9px / 10px 1px no-repeat`,
    L: `${dots} 9px 0 / 1px 10px no-repeat, ${dotsX} 9px 9px / 10px 1px no-repeat`,
    ' ': 'none',
};

const Guide = styled.span`
    display: flex;
    align-items: center;
    justify-content: center;
    width: 19px;
    height: 18px;
    flex: none;
    background: ${p => guideBackgrounds[p.$type]};
`;

const Expander = styled.button`
    width: 9px;
    height: 9px;
    border: 1px solid #8c8c8c;
    background:
        linear-gradient(#333, #333) 1px 3px / 5px 1px no-repeat,
        linear-gradient(#333, #333) 3px 1px / ${p => (p.$open ? '0 0' : '1px 5px')} no-repeat,
        #fff;
`;

/* guides: "+" closed, "-" open, "t" leaf, "L" last leaf, "|" line passing by */
const tree = [
    ['_', 'root', 'HBV* [Beispiele]'],
    [' -', 'open', 'Modelldaten'],
    [' |+', 'knoten', 'Knoten'],
    [' |+', 'linie', 'Linien'],
    [' |+', 'material', 'Materialien'],
    [' |+', 'flaeche', 'Flächen'],
    [' |t', 'volumen', 'Volumenkörper'],
    [' |t', 'oeffnung', 'Öffnungen'],
    [' |+', 'lager', 'Knotenlager'],
    [' |t', 'linienlager', 'Linienlager'],
    [' |t', 'flaechenlager', 'Flächenlager'],
    [' |t', 'gelenk', 'Liniengelenke'],
    [' |t', 'flaeche', 'Veränderliche Dicken'],
    [' |t', 'ortho', 'Orthotrope Flächen und Membranen'],
    [' |+', 'quer', 'Querschnitte'],
    [' |+', 'stabend', 'Stabendgelenke'],
    [' |+', 'gelenk', 'Stabexzentrizitäten'],
    [' |t', 'teilung', 'Stabteilungen'],
    [' |+', 'linie', 'Stäbe'],
    [' |t', 'gelenk', 'Rippen'],
    [' |t', 'bettung', 'Stabbettungen'],
    [' |t', 'nichtlin', 'Stabnichtlinearitäten'],
    [' |t', 'teilung', 'Stabsätze'],
    [' |t', 'durch', 'Durchdringungen der Flächen'],
    [' |t', 'netz', 'FE-Netzverdichtungen'],
    [' |+', 'leer', 'Knotenfreigaben'],
    [' |+', 'leer', 'Linienfreigabe-Typen'],
    [' |+', 'gelenk', 'Linienfreigaben'],
    [' |t', 'freiflaeche', 'Flächenfreigabe-Typen'],
    [' |t', 'freiflaeche', 'Flächenfreigaben'],
    [' |t', 'leer', 'Verbindung von zwei Stäben'],
    [' |t', 'leer', 'Anschlüsse'],
    [' |L', 'koppel', 'Knotenkopplungen'],
    [' -', 'open', 'Lastfälle und Kombinationen'],
    [' |+', 'lf', 'Lastfälle'],
    [' |t', 'lk', 'Lastkombinationen'],
    [' |L', 'ek', 'Ergebniskombinationen'],
    [' +', 'leer', 'Lasten'],
    [' t', 'leer', 'Ergebnisse'],
    [' t', 'leer', 'Schnitte'],
    [' t', 'leer', 'Glättungsbereiche'],
    [' t', 'leer', 'Ausdruckprotokolle'],
    [' +', 'leer', 'Hilfsobjekte'],
    [' -', 'open', 'Zusatzmodule'],
    [' |-', 'open', 'Favoriten'],
    [' ||t', 'holz', 'RF-HOLZ Pro - Bemessung von Holzstäben'],
    [' ||t', 'dynam', 'RF-DYNAM Pro - Dynamische Analyse'],
    [' ||t', 'stabil', 'RF-STABIL - Stabilitätsanalyse'],
    [' ||t', 'imp', 'RF-IMP - Generierung von Imperfektionen'],
    [' ||t', 'laminate', 'RF-LAMINATE - Bemessung von Laminattragwerken'],
];

const TreeItem = ({ guides, kind, label }) => (
    <TreeRow $root={kind === 'root'}>
        {guides.split('').map((g, i) => {
            if ('+-_'.includes(g)) {
                return (
                    <Guide key={i} $type={g === '_' ? 'L' : 't'}>
                        <Expander type="button" $open={g !== '+'} aria-label={label} aria-expanded={g !== '+'} />
                    </Guide>
                );
            }
            return <Guide key={i} $type={g} />;
        })}
        <TreeIcon kind={kind} />
        <span>{label}</span>
    </TreeRow>
);

const ScrollTrack = styled.div`
    display: flex;
    flex-direction: ${p => (p.$across ? 'row' : 'column')};
    background: #f0f0f1;

    button {
        display: flex;
        align-items: center;
        justify-content: center;
        flex: 0 0 17px;
    }
`;

const ScrollFill = styled.div`
    flex: ${p => p.$size};
    background: ${p => (p.$thumb ? '#cdcdcd' : 'none')};
`;

const arrows = { up: 'M1 6L5 2L9 6', down: 'M1 2L5 6L9 2', left: 'M6 0L2 4L6 8', right: 'M3 0L7 4L3 8' };
const Arrow = ({ to }) => (
    <svg width="10" height="8" viewBox="0 0 10 8"><path d={arrows[to]} fill="none" stroke="#505050" strokeWidth="2" /></svg>
);

const ScrollBar = ({ across, lead = 0, size, rest }) => (
    <ScrollTrack $across={across}>
        <button type="button" aria-label="Zurück blättern"><Arrow to={across ? 'left' : 'up'} /></button>
        {lead > 0 && <ScrollFill $size={lead} />}
        <ScrollFill $thumb $size={size} />
        <ScrollFill $size={rest} />
        <button type="button" aria-label="Weiter blättern"><Arrow to={across ? 'right' : 'down'} /></button>
    </ScrollTrack>
);

const PaneTabs = styled.div`
    display: flex;
    align-items: center;
    gap: 8px;
    height: 25px;
    padding: 0 0 3px 4px;
    color: #44475a;
`;

const PaneTab = styled.button`
    display: flex;
    align-items: center;
    gap: 2px;
    height: 18px;
    padding: 0 4px 0 1px;
    ${p => p.$on && 'background: #f1f2f8; box-shadow: 1px 1px #a8acba;'}
`;

/* ---------- model view ---------- */

const MainColumn = styled.main`
    display: flex;
    flex-direction: column;
    min-width: 0;
    min-height: 0;
`;

const ModelView = styled.svg`
    display: block;
    flex: 1;
    width: 100%;
    min-height: 0;
    border-left: 1px solid #777;
    border-bottom: 1px solid #fff;
    background: #fff;
`;

const Triad = ({ x, y, small }) => (
    <g transform={`translate(${x} ${y})`} fontFamily="Open Sans, sans-serif" fontSize={small ? 8 : 10}>
        <path d="M0 0L22-8" stroke="#d32a1c" strokeWidth="2" />
        <path d="M20-11l10 0-8 6z" fill="#b81a14" />
        <path d="M0 0L21 8" stroke="#1fa524" strokeWidth="2" />
        <path d="M21 5l8 6-9 0z" fill="#158a1a" />
        <path d="M0 0V28" stroke="#1a18d8" strokeWidth="2" />
        <path d="M-3 27h6l-3 11z" fill="#120f9c" />
        <text x="34" y={small ? -10 : -12} fill="#b8433e">{small ? 'x' : 'X'}</text>
        <text x="33" y="16" fill="#2f9a34">{small ? 'y' : 'Y'}</text>
        <text x="-3" y={small ? 48 : 49} fill="#2420c8">{small ? 'z' : 'Z'}</text>
    </g>
);

const Model = () => (
    <ModelView viewBox="350 101 1570 653" preserveAspectRatio="xMinYMin slice" role="img" aria-label="Modell HBV">
        <path d="M1066 653L1159 690V600L1066 640z" fill="#ff8c00" />
        <path d="M1159 615L1197 603V676L1159 690z" fill="#cc1400" />
        <path d="M675 755L1758 337V385L794 755z" fill="#ff8c00" />
        <path d="M606 755L1730 324L1758 337L673 755z" fill="#9a5200" />
        <path d="M350 101V154L490 101H1222L1743 316L1727 323L603 755H350z" fill="#79777a" />
        <path d="M603 755L1122 556L1727 322" stroke="#fff" strokeWidth="2" fill="none" />
        <path d="M601 755L1727 322" stroke="#5ab9b6" />
        <path d="M978 612L1120 557" stroke="#9b9a4a" />
        <path d="M682 755L1758 339" stroke="#9aa84a" />
        <path d="M796 756L1760 386V337" stroke="#fff" strokeWidth="2" fill="none" />
        <path d="M798 756L1761 386V337H1758" stroke="#52cfc4" fill="none" />
        <path d="M1066 654L1163 616" stroke="#8fb25a" />
        <path d="M1148 548L1177 561L1225 542L1195 529M1177 561V620L1225 602V542M1195 548V603M1177 620L1160 614M1225 602L1210 597" stroke="#58c8a4" fill="none" />
        <path d="M1177 608V640" stroke="#4a1010" />
        <path d="M1177 538V560M1743 318V338" stroke="#909a80" strokeDasharray="1 2" />
        <path d="M1187 602L1197 605" stroke="#801010" />
        <Triad x={405} y={648} />
        <Triad x={654} y={658} small />
        <path d="M976 532V548L980 545L983 551L985 550L982 544H987z" fill="#fff" stroke="#222" />
    </ModelView>
);

/* ---------- table pane ---------- */

const TablePane = styled.section`
    display: flex;
    flex-direction: column;
    margin-top: 5px;
    border-top: 1px solid #eef0f6;
    padding-left: 1px;
    background: #f1f0f2;
`;

const TableTools = styled.div`
    display: flex;
    align-items: center;
    height: 26px;
    padding-left: 7px;
    border-bottom: 1px solid #70737e;
    background: linear-gradient(#f1f3fb, #e3e6f1 50%, #cdd0dc);
`;

const SheetArea = styled.div`
    display: grid;
    grid-template-columns: minmax(0, 1fr) 17px;
    column-gap: 2px;
    padding: 4px 1px 7px 1px;
    border-bottom: 1px solid #777;
`;

const Sheet = styled.table`
    width: 100%;
    table-layout: fixed;
    border-collapse: collapse;
    border: 1px solid #808080;
    background: #fff;
    font-family: ${tableFont};
    font-size: 11px;
    line-height: 13px;
    color: #111;

    tr { height: 16px; }
    td, th {
        padding: 0;
        font-weight: 400;
        white-space: nowrap;
        text-align: center;
        border: 1px solid #a3a3a3;
    }
    thead th {
        background: #f1f0f2;
        border-top: 0;
        border-bottom: 0;
    }
    thead tr:first-child { height: 13px; }
    thead tr:last-child { height: 17px; }
    thead tr:last-child th {
        border-bottom: 1px solid #808080;
        vertical-align: top;
    }
`;

const Letter = styled.th`
    && {
        background: ${p => (p.$on ? '#d6d5d7' : '#e2e1e2')};
        border: 1px solid #707070;
    }
    font-size: 12px;
    line-height: 12px;
`;

const Corner = styled.th`
    && {
        padding-top: 6px;
        background: #e2e1e2;
        border: 1px solid #707070;
        white-space: normal;
    }
`;

const RowHead = styled.th`
    && {
        background: ${p => (p.$on ? '#d6d5d7' : '#e4e3e4')};
        border: 1px solid #707070;
        box-shadow: inset 1px 1px #fafafa;
    }
`;

const Cell = styled.td`
    && {
        text-align: ${p => (p.$left ? 'left' : 'center')};
        padding-left: ${p => (p.$left ? '4px' : '0')};
        background: ${p => (p.$picked ? '#0072dc' : p.$locked ? '#f1f0f2' : '#fff')};
    }
`;

const columnWidths = [45, 60, 72, 84, 60, 108, 108, 108, 113, 84];

const rows = [
    ['2', '15', '22'],
    ['5', '15,16', '23'],
    ['8', '16,17', '24'],
    ['11', '17,18', '25'],
    ['14', '18,19', '26'],
    ['17', '19,20', '27'],
    ['20', '20', '28'],
    null,
    null,
    null,
];

const ReleaseTable = () => (
    <Sheet>
        <colgroup>
            {columnWidths.map((w, i) => <col key={i} width={w} />)}
            <col />
        </colgroup>
        <thead>
            <tr>
                <Corner rowSpan={3}>Freigabe<br />Nr.</Corner>
                {'ABCDEFGHIJ'.split('').map(l => <Letter key={l} $on={l === 'F'}>{l}</Letter>)}
            </tr>
            <tr>
                <th>Knoten</th>
                <th>Stabend-</th>
                <th colSpan={2}>Lokales Achsensystem</th>
                <th colSpan={3}>Freigegebene Objekte</th>
                <th>Freigabe</th>
                <th>Freigegeben</th>
                <th />
            </tr>
            <tr>
                <th>Nr.</th>
                <th>gelenk Nr.</th>
                <th>von</th>
                <th>Nr.</th>
                <th>Stäbe Nr.</th>
                <th>Flächen Nr.</th>
                <th>Volumenkörper Nr.</th>
                <th>Lage</th>
                <th>Knoten Nr.</th>
                <th>Kommentar</th>
            </tr>
        </thead>
        <tbody>
            {rows.map((row, i) => {
                const picked = i > 0 && i < 6;
                const [node, members, released] = row || [];
                return (
                    <tr key={i}>
                        <RowHead $on={picked}>{i + 1}</RowHead>
                        <Cell>{node}</Cell>
                        <Cell>{row && '1'}</Cell>
                        <Cell>{row && 'Stab'}</Cell>
                        <Cell>{row && '1'}</Cell>
                        <Cell $left>{members}</Cell>
                        <Cell $picked={picked} />
                        <Cell />
                        <Cell>{row && 'Ursprungsknoten'}</Cell>
                        <Cell $locked>{released}</Cell>
                        <Cell $locked={!row} />
                    </tr>
                );
            })}
        </tbody>
    </Sheet>
);

const SheetTabs = styled.div`
    display: flex;
    align-items: flex-start;
    height: 36px;
    font-family: ${tableFont};
    font-size: 11px;
`;

const SheetTab = styled.button`
    height: 17px;
    padding: 0 3px;
    border: 1px solid #777;
    border-top: 0;
    border-left-color: #fff;
    border-radius: 0 0 4px 4px;
    background: ${p => (p.$on ? '#fafafa' : '#e6e5e7')};
    white-space: nowrap;
`;

const SheetNav = styled.div`
    display: flex;
    margin-left: auto;

    button {
        display: flex;
        align-items: center;
        justify-content: center;
        width: 16px;
        height: 16px;
        border-right: 1px solid #999;
    }
`;

const sheetTabs = [
    'Flächen', 'Volumenkörper', 'Öffnungen', 'Knotenlager', 'Linienlager', 'Flächenlager', 'Liniengelenke',
    'Querschnitte', 'Stabendgelenke', 'Stabexzentrizitäten', 'Stabteilungen', 'Stäbe', 'Stabbettungen',
    'Stabnichtlinearitäten', 'Stabsätze', 'Durchdringungen', 'FE-Netzverdichtungen', 'Knotenfreigaben',
    'Linienfreigabe-Typen',
];

/* ---------- status bar ---------- */

const StatusBar = styled.footer`
    display: grid;
    grid-template-columns: minmax(0, 1fr) auto 153px 88px 74px 74px 73px;
    align-items: center;
    height: 18px;
    padding-left: 4px;
    background: linear-gradient(#eceef4, #b4b6c0 30%, #b9bbc4);
    color: #333644;
`;

const Toggles = styled.div`
    display: flex;
    gap: 2px;
`;

const Toggle = styled.button`
    height: 17px;
    padding: 0 3px 0 2px;
    border: 1px solid;
    border-color: ${p => (p.$on ? '#fff #999 #999 #fff' : '#1a1a1a #fff #fff #1a1a1a')};
    background: ${p => (p.$on ? '#d4d6de' : 'none')};
    font-family: ${tableFont};
    font-size: 11px;
    line-height: 14px;
`;

const StatusCell = styled.span`
    height: 14px;
    border-right: 1px solid #9c9faa;
`;

const Watermark = styled.svg`
    position: absolute;
    right: 24px;
    bottom: 24px;
`;

const menu = [
    ['', 'D', 'atei'], ['Bearbeite', 'n', ''], ['', 'A', 'nsicht'], ['', 'E', 'infügen'], ['Be', 'r', 'echnung'],
    ['Er', 'g', 'ebnisse'], ['E', 'x', 'tras'], ['', 'T', 'abelle'], ['', 'O', 'ptionen'], ['', 'Z', 'usatzmodule'],
    ['', 'F', 'enster'], ['', 'H', 'ilfe'],
];

const App = () => (
    <Shell>
        <GlobalStyle />
        <TitleBar>
            <Svg><circle cx="9" cy="7" r="6" fill="#7c8594" stroke="#3f4858" /><path d="M4 4L9 1L14 5L10 11L5 9z" fill="#a6b4c6" stroke="#4a5566" /><path d="M7 7.500H3V10.500H5.500C7.500 10.500 7.500 14.500 5 14.500H2.500" fill="none" stroke="#ffd820" strokeWidth="1.800" /></Svg>
            <h1>RFEM 5.12.02 x64 - [HBV*]</h1>
            <WindowButton type="button" aria-label="Minimieren"><svg width="10" height="10"><path d="M0 5.500H10" stroke="#fff" /></svg></WindowButton>
            <WindowButton type="button" aria-label="Verkleinern"><svg width="10" height="10"><path d="M.5 2.500h7v7h-7zM2.500 2V.5h7v7H8" fill="none" stroke="#fff" /></svg></WindowButton>
            <WindowButton type="button" aria-label="Schließen"><svg width="10" height="10"><path d="M0 0L10 10M10 0L0 10" stroke="#fff" /></svg></WindowButton>
        </TitleBar>

        <MenuBar>
            <AppMark>
                <Svg size={17}><path d="M0 1h16v14H0z" fill="#1c2b66" /><path d="M1 11L6 3V11M6 3C9 4 10 9 11 11M11 5L15 10M1 10.500H15" stroke="#fff" fill="none" /><path d="M8 11V15" stroke="#fff" /></Svg>
            </AppMark>
            {menu.map(([a, key, b]) => <a key={a + key} href="#menu">{a}<u>{key}</u>{b}</a>)}
            <MdiButtons>
                <button type="button" aria-label="Dokument minimieren"><svg width="12" height="10"><path d="M2 8H9" stroke="#555a6c" strokeWidth="2" /></svg></button>
                <button type="button" aria-label="Dokument verkleinern"><svg width="12" height="10"><path d="M1 4.500h7v4H1zM3 4V1.500h7V7" fill="none" stroke="#6b6f82" strokeWidth="1.500" /></svg></button>
                <button type="button" aria-label="Dokument schließen"><svg width="10" height="10"><path d="M1 1L8 9M8 1L1 9" stroke="#6b6f82" strokeWidth="2" /></svg></button>
            </MdiButtons>
        </MenuBar>

        <ToolRow>
            <Toolbar>
                <Tools items="newDoc open cabinet cabinetBlue save notes print preview | undo redo | plane pick pickAll pickAdd pane | listView! tableView! | loadNew" />
                <ComboBox>
                    <select aria-label="Lastfall" defaultValue="LF1"><option value="LF1">LF1 - Eigengewicht</option></select>
                </ComboBox>
                <Tools items="prev next loadShow valGray resShow valLine | glasses frame frame2" />
            </Toolbar>
            <Toolbar>
                <Tools items="handGrid snapGrid planeXY! planeYZ planeXZ gridDots pin | moveCopy rotate mirror connect info settings gears" />
            </Toolbar>
            <Toolbar>
                <Tools items="xyDown xyUp pdfDown pdfUp" />
            </Toolbar>
        </ToolRow>
        <ToolRow>
            <Toolbar>
                <Tools items="nodeNew> lineNew memberNew> polyNew> | nodeSupport lineSupport surfSupport | dimension> label guide | surfNew> openingNew> solidPlane> solid solidNew> | combo> loadNode loadLine loadMember loadSurf loadSolid>" />
            </Toolbar>
            <Toolbar>
                <Tools items="pan zoomWin zoomOff wire boxes | axX axY axZ axNX> display> | solidDark>" />
            </Toolbar>
            <Toolbar>
                <Tools items="deform deform2 | section colorSurf colorSolid forces smooth panels> anim tableGray | report wizard> colors>" />
            </Toolbar>
        </ToolRow>

        <Workspace>
            <Navigator>
                <PaneTitle><span>Projekt-Navigator - Daten</span><PinClose /></PaneTitle>
                <TreeBox>
                    <TreeList>
                        {tree.map(([guides, kind, label]) => <TreeItem key={label} guides={guides} kind={kind} label={label} />)}
                    </TreeList>
                    <ScrollBar lead={8} size={376} rest={474} />
                    <ScrollBar across size={175} rest={113} />
                </TreeBox>
                <PaneTabs>
                    <PaneTab type="button" $on><Svg><path d="M1 3h9v9H1z" fill="#e6c33c" stroke="#2b3f7c" /><path d="M6 2h9v6H6z" fill="#e8eefa" stroke="#2b3f7c" /><circle cx="10" cy="9" r="3.500" fill="#dbe6f6" stroke="#3b4f84" /><path d="M12 12l3 3" stroke="#3b4f84" strokeWidth="2" /></Svg>Daten</PaneTab>
                    <PaneTab type="button"><Svg><path d="M1.500 4.500h12v10h-12z" fill="#dfe8fa" stroke="#2b4484" /><path d="M1 12h13v3H1z" fill="#3b64b8" /><path d="M3 7.500H12M3 9.500H12" stroke="#3b64b8" /><path d="M4 2l7-1 4 2v3l-5-1z" fill="#5a4a44" /></Svg>Zeigen</PaneTab>
                    <PaneTab type="button"><Svg><path d="M3 12L11 1L14 4V13z" fill="#7e9bd4" stroke="#2b4484" /><path d="M1 14.500H15" stroke="#2b4484" strokeWidth="2" /></Svg>Ansichten</PaneTab>
                </PaneTabs>
            </Navigator>

            <MainColumn>
                <Model />
                <TablePane>
                    <PaneTitle><span>1.24 Knotenfreigaben</span><PinClose /></PaneTitle>
                    <TableTools>
                        <Tools items="tblEdit! tblRowIns tblColIns tblLine tblWave | tblPrev tblNext | hookDown! hookUp! sync | tblPlus tblSwap tblInfo | tblX | rowDel rowLeft rowRight | tblYellow tblBlue | tblNote | propHand glasses excel calc | abc fx fxDel" />
                    </TableTools>
                    <SheetArea>
                        <ReleaseTable />
                        <ScrollBar size={174} rest={1} />
                    </SheetArea>
                    <SheetTabs>
                        {sheetTabs.map(tab => <SheetTab key={tab} type="button" $on={tab === 'Knotenfreigaben'}>{tab}</SheetTab>)}
                        <SheetNav>
                            {['M2 1V9M9 1L4 5L9 9z', 'M8 1L3 5L8 9z', 'M3 1L8 5L3 9z', 'M8 1V9M2 1L7 5L2 9z'].map((d, i) => (
                                <button key={d} type="button" aria-label={`Tabelle ${i + 1}`}><svg width="10" height="10"><path d={d} fill="#111" stroke="#111" /></svg></button>
                            ))}
                        </SheetNav>
                    </SheetTabs>
                </TablePane>
            </MainColumn>
        </Workspace>

        <StatusBar>
            <span>Linienfreigabe Nr. 6</span>
            <Toggles>
                {['FANG', 'RASTER', 'KARTES', 'OFANG', 'HLINIEN', 'DXF'].map(t => (
                    <Toggle key={t} type="button" $on={t === 'RASTER'}>{t}</Toggle>
                ))}
            </Toggles>
            <StatusCell /><StatusCell /><StatusCell /><StatusCell />
        </StatusBar>

        <Watermark width="40" height="40" viewBox="0 0 40 40" aria-label="Dlubal">
            <circle cx="20" cy="20" r="20" fill="#5b5d9c" />
            <path d="M7 9H33V22H7z" fill="#e9eaf3" />
            <path d="M9 18L15 10V18M15 10C20 11 23 15 24 18M24 12L31 18M7 18.500H33M20 9V22" stroke="#5b5d9c" fill="none" />
            <text x="20" y="33" textAnchor="middle" fontSize="9" fontWeight="700" fill="#fff">Dlubal</text>
        </Watermark>
    </Shell>
);

export default App;
